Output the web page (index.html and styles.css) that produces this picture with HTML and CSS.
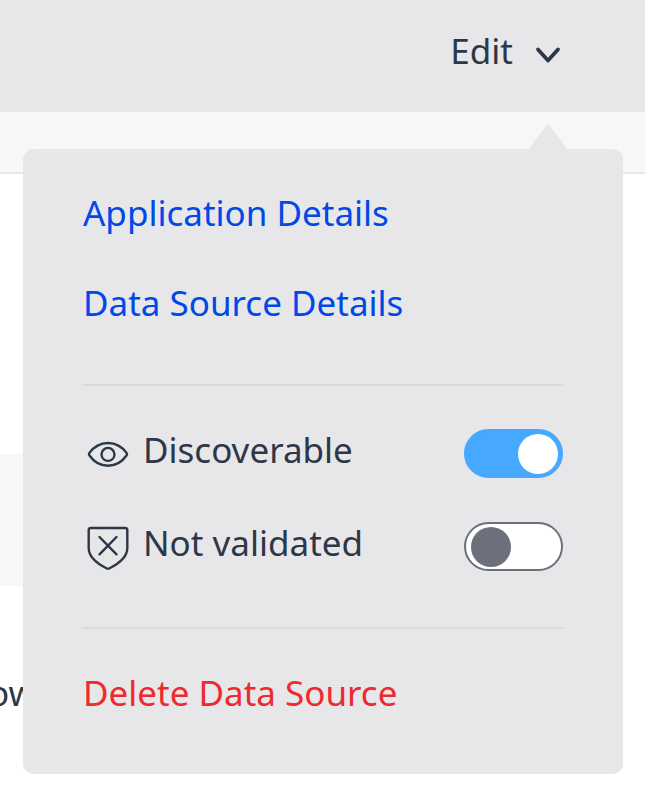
FILE: index.html
```html
<!DOCTYPE html>
<html lang="en">
<head>
<meta charset="utf-8">
<title>Edit data source</title>
<link rel="stylesheet" href="styles.css">
</head>
<body>
<header class="toolbar">
  <button class="edit">Edit
    <svg class="chevron" width="26" height="18" viewBox="0 0 26 18"><path d="M3 3.500 13 14.500 23 3.500"/></svg>
  </button>
</header>
<div class="subbar"></div>
<main class="page">
  <div class="stripe"></div>
  <span class="clipped">ow</span>
</main>
<section class="menu">
  <svg class="arrow" width="40" height="26" viewBox="0 0 40 26"><path d="M0 26 19.200 .6Q20-.4 20.800 .6L40 26Z"/></svg>
  <nav class="links">
    <a class="link">Application Details</a>
    <a class="link">Data Source Details</a>
  </nav>
  <div class="options">
    <div class="option">
      <svg class="icon" width="50" height="50" viewBox="0 0 50 50"><path d="M6.300 24.100C16 10.700 34 10.700 43.700 24.100Q44.400 25.200 43.700 26.200C34 40.200 16 40.200 6.300 26.200Q5.600 25.200 6.300 24.100Z"/><circle cx="25" cy="25.400" r="6.500"/></svg>
      <span class="label">Discoverable</span>
      <span class="switch on"></span>
    </div>
    <div class="option">
      <svg class="icon" width="50" height="50" viewBox="0 0 50 50"><path d="M8.500 6H42Q44.300 6 44.300 8V26C44.300 34 38 40.500 26.500 46.300Q25 47 23.500 46.300C12 40.500 5.700 34 5.700 26V8Q5.700 6 8 6Z"/><path d="M16.500 15 33.500 32.300M33.500 15 16.500 32.300"/></svg>
      <span class="label">Not validated</span>
      <span class="switch"></span>
    </div>
  </div>
  <a class="link danger">Delete Data Source</a>
</section>
</body>
</html>
```
FILE: styles.css
```css
* { box-sizing: border-box; }
body {
  margin: 0;
  height: 795px;
  overflow: hidden;
  position: relative;
  background: #fff;
  color: #2d3748;
  font: 35px/50px "Noto Sans", sans-serif;
}
.toolbar {
  height: 112px;
  padding: 26px 84px 0 0;
  display: flex;
  justify-content: flex-end;
  align-items: flex-start;
  background: #e7e7e9;
}
.edit {
  display: flex;
  align-items: center;
  gap: 22px;
  padding: 0;
  border: 0;
  background: none;
  color: inherit;
  font: inherit;
}
.chevron { margin-top: 8px; fill: none; stroke: #2d3748; stroke-width: 3.8; stroke-linecap: round; stroke-linejoin: round; }
.subbar { height: 62px; background: #f7f7f7; border-bottom: 2px solid #e7e7e8; }
.page { padding-top: 280px; }
.stripe { width: 600px; height: 132px; background: #f7f7f7; }
.clipped { display: block; margin: 82px 0 0 -12px; }
.menu {
  position: absolute;
  left: 23px;
  top: 149px;
  width: 600px;
  height: 625px;
  padding: 39px 60px 0;
  border-radius: 10px;
  background: #e7e7e9;
}
.arrow { position: absolute; left: 505px; top: -25px; fill: #e7e7e9; }
.links { display: flex; flex-direction: column; gap: 40px; }
.link { display: block; color: #0049e6; }
.options {
  display: flex;
  flex-direction: column;
  gap: 44px;
  margin: 56px 0 39px;
  padding: 43px 0 56px;
  border-top: 2px solid #dadadd;
  border-bottom: 2px solid #dadadd;
}
.option { display: flex; align-items: flex-start; height: 49px; }
.icon { flex: none; fill: none; stroke: #2d3748; stroke-width: 2.4; stroke-linecap: round; stroke-linejoin: round; }
.label { flex: 1; margin: -4px 0 0 10px; }
.switch {
  display: flex;
  align-items: center;
  width: 99px;
  height: 49px;
  padding: 0 5px;
  border: 2px solid #6c707b;
  border-radius: 25px;
  background: #fff;
}
.switch::before { content: ""; width: 40px; height: 40px; border-radius: 50%; background: #6c707b; }
.switch.on { justify-content: flex-end; padding: 0 3px; border-color: #47a8ff; background: #47a8ff; }
.switch.on::before { background: #fff; }
.danger { color: #ed2a30; }
```
